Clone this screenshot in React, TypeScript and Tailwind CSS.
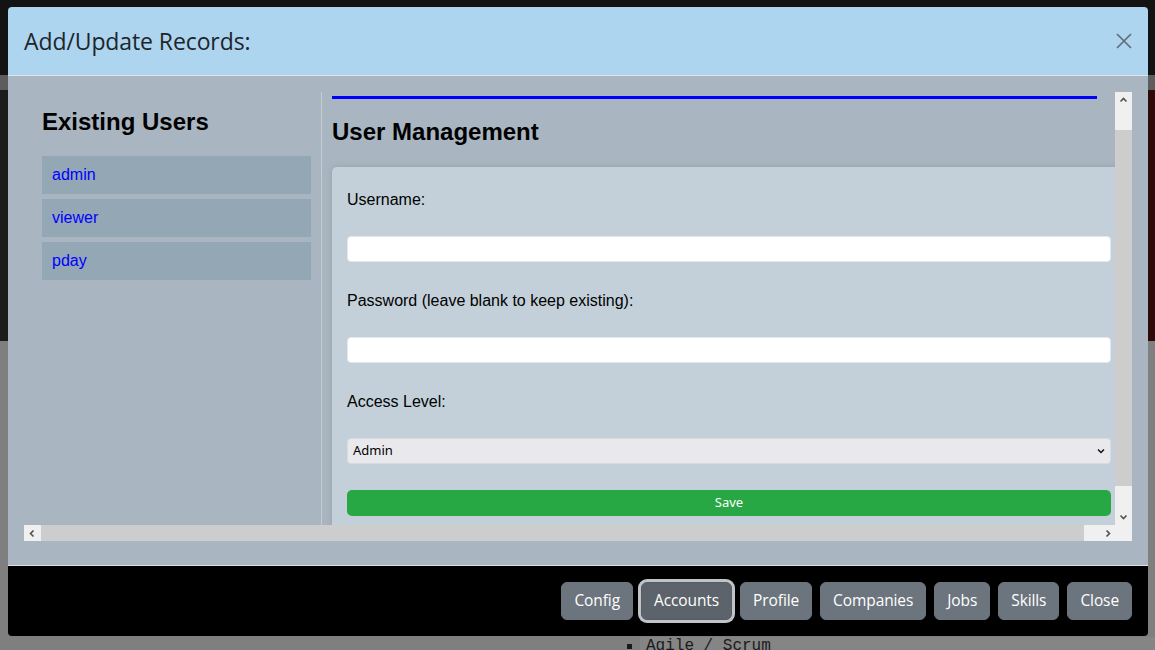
import React from "react";

function Chevron({ dir }: { dir: "up" | "down" | "left" | "right" }) {
  const paths: Record<string, string> = {
    up: "M1.5 5.5 L4.5 2.5 L7.5 5.5",
    down: "M1.5 2.5 L4.5 5.5 L7.5 2.5",
    left: "M5.5 1.5 L2.5 4.5 L5.5 7.5",
    right: "M3.5 1.5 L6.5 4.5 L3.5 7.5",
  };
  return (
    <svg width="9" height="9" viewBox="0 0 9 9">
      <path d={paths[dir]} fill="none" stroke="#505050" strokeWidth="1.6" />
    </svg>
  );
}

const users = ["admin", "viewer", "pday"];
const buttons = ["Config", "Accounts", "Profile", "Companies", "Jobs", "Skills", "Close"];

export default function App() {
  return (
    <div className="relative w-[1155px] h-[650px] overflow-hidden bg-[#7f7f7f]">
      {/* dimmed page behind the dialog */}
      <div className="h-[75px] bg-[#131313]" />
      <div className="h-[15px] bg-[#5d5d5d]" />
      <div className="h-[251px] bg-gradient-to-r from-[#1c1c1c] via-[#0a0a0a] to-[#2e0a0a]" />
      <div className="h-[309px] bg-[#7f7f7f] flex flex-col justify-end">
        <div className="flex h-[13px] overflow-hidden">
          <div className="w-[640px] flex justify-end pr-[8px]">
            <span className="mt-[7px] w-[5px] h-[5px] bg-[#1a1a1a]" />
          </div>
          <div className="flex-1 bg-[#858585] pl-[6px] font-['Liberation_Mono',monospace] text-[16px] leading-[18px] text-[#1a1a1a] whitespace-pre">
            Agile / Scrum
          </div>
        </div>
      </div>

      {/* dialog */}
      <div className="absolute left-[8px] top-[7px] w-[1140px] h-[629px] flex flex-col rounded-[4px] overflow-hidden">
        {/* header */}
        <div className="h-[69px] shrink-0 bg-[#add5f0] border-b border-[#dee2e6] flex items-center justify-between pl-4 pr-4">
          <div className="font-['Open_Sans',sans-serif] text-[23px] tracking-[-0.1px] text-[#212529] leading-[36px]">
            Add/Update Records:
          </div>
          <svg width="16" height="16" viewBox="0 0 16 16">
            <path d="M1 1 L15 15 M15 1 L1 15" stroke="#5e6d77" strokeWidth="1.7" fill="none" />
          </svg>
        </div>

        {/* body */}
        <div className="h-[489px] shrink-0 bg-[#a9b6c1] pt-4 px-4 pb-6 font-['Liberation_Sans',Arial,sans-serif]">
          <div className="flex flex-col h-[449px]">
            <div className="flex h-[433px]">
              <div className="flex-1 min-w-0 overflow-hidden flex">
                {/* left column */}
                <div className="w-[298px] shrink-0 border-r border-[#c4cdd4] pl-[18px] pr-[10px] pt-[16px]">
                  <h2 className="text-[24px] font-bold leading-[28px] text-black">Existing Users</h2>
                  <div className="mt-[20px] flex flex-col gap-[5px]">
                    {users.map((u) => (
                      <div key={u} className="h-[38px] bg-[#93a7b4] px-[10px] py-[10px] text-[16px] leading-[18px] text-[#0000ff]">
                        {u}
                      </div>
                    ))}
                  </div>
                </div>
                {/* right column */}
                <div className="flex-1 min-w-0 pl-[10px] pt-[4px]">
                  <div className="w-[765px] h-[3px] bg-[#0000ff]" />
                  <h2 className="mt-[19px] text-[24px] font-bold leading-[28px] text-black">User Management</h2>
                  <div className="mt-[21px] w-[794px] h-[400px] bg-[#c3d0d9] rounded-[5px] shadow-[0_0_6px_rgba(0,0,0,0.12)] px-[15px] pt-[24px]">
                    <div className="text-[16px] leading-[18px] text-black">Username:</div>
                    <div className="mt-[27px] h-[26px] bg-white rounded-[4px] border border-[#e4e8eb]" />
                    <div className="mt-[30px] text-[16px] leading-[18px] text-black">Password (leave blank to keep existing):</div>
                    <div className="mt-[27px] h-[26px] bg-white rounded-[4px] border border-[#e4e8eb]" />
                    <div className="mt-[30px] text-[16px] leading-[18px] text-black">Access Level:</div>
                    <div className="mt-[27px] h-[26px] bg-[#e9e9ed] rounded-[4px] border border-[#d9dbdf] flex items-center justify-between pl-[5px] pr-[4px]">
                      <span className="font-['Noto_Sans',sans-serif] text-[13px] text-black">Admin</span>
                      <svg width="10" height="10" viewBox="0 0 10 10">
                        <path d="M2 3.5 L5 6.5 L8 3.5" fill="none" stroke="#111" strokeWidth="1.5" />
                      </svg>
                    </div>
                    <div className="mt-[26px] h-[26px] bg-[#28a745] rounded-[5px] flex items-center justify-center font-['Noto_Sans',sans-serif] text-[13px] text-white">
                      Save
                    </div>
                  </div>
                </div>
              </div>
              {/* vertical scrollbar */}
              <div className="w-[17px] shrink-0 flex flex-col bg-[#f0f0f0]">
                <div className="h-[16px] flex items-center justify-center">
                  <Chevron dir="up" />
                </div>
                <div className="mt-[22px] h-[356px] bg-[#cdcdcd]" />
                <div className="mt-[23px] h-[16px] flex items-center justify-center">
                  <Chevron dir="down" />
                </div>
              </div>
            </div>
            {/* horizontal scrollbar */}
            <div className="h-[16px] flex bg-[#f0f0f0]">
              <div className="w-[17px] flex items-center justify-center">
                <Chevron dir="left" />
              </div>
              <div className="flex-1 bg-[#cdcdcd]" />
              <div className="w-[15px]" />
              <div className="w-[16px] flex items-center justify-center">
                <Chevron dir="right" />
              </div>
              <div className="w-[17px]" />
            </div>
          </div>
        </div>

        {/* footer */}
        <div className="h-[71px] shrink-0 bg-black border-t border-[#dee2e6] flex items-center justify-end gap-2 px-4">
          {buttons.map((b) => (
            <div
              key={b}
              className={
                b === "Accounts"
                  ? "h-[38px] px-3 rounded-[6px] border border-[#565e64] bg-[#5c636a] ring-[3px] ring-[#c0c4c8] flex items-center font-['Open_Sans',sans-serif] text-[15.5px] tracking-[-0.1px] text-white"
                  : "h-[38px] px-3 rounded-[6px] border border-[#6c757d] bg-[#6c757d] flex items-center font-['Open_Sans',sans-serif] text-[15.5px] tracking-[-0.1px] text-white"
              }
            >
              {b}
            </div>
          ))}
        </div>
      </div>
    </div>
  );
}
